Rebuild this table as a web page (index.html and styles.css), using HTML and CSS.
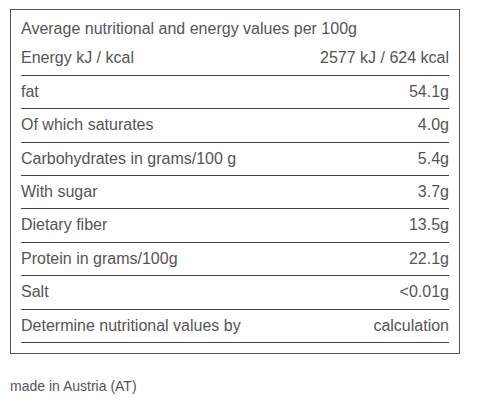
FILE: index.html
```html
<!DOCTYPE html>
<html>
    <head>
        <meta charset="utf-8">
        <title>Nutrition values</title>
        <link rel="stylesheet" href="styles.css">
    </head>
    <body>
        <div class="nutrition">
            <div class="caption">Average nutritional and energy values per 100g</div>
            <div class="row"><span>Energy kJ / kcal</span><span>2577 kJ / 624 kcal</span></div>
            <div class="row"><span>fat</span><span>54.1g</span></div>
            <div class="row"><span>Of which saturates</span><span>4.0g</span></div>
            <div class="row"><span>Carbohydrates in grams/100 g</span><span>5.4g</span></div>
            <div class="row"><span>With sugar</span><span>3.7g</span></div>
            <div class="row"><span>Dietary fiber</span><span>13.5g</span></div>
            <div class="row"><span>Protein in grams/100g</span><span>22.1g</span></div>
            <div class="row"><span>Salt</span><span>&lt;0.01g</span></div>
            <div class="row"><span>Determine nutritional values by</span><span>calculation</span></div>
        </div>
        <p class="origin">made in Austria (AT)</p>
    </body>
</html>
```

FILE: styles.css
```css
html,body{
    margin: 0px;
    background-color: #fff;
}

body{
    padding: 9px 0 0 10px;
    font-family: "Liberation Sans", Arial, sans-serif;
    color: #555;
}

.nutrition{
    width: 428px;
    border: 1px solid #555;
    padding: 10px;
    font-size: 16px;
}

.caption{
    line-height: 18.4px;
    padding-bottom: 4px;
}

.row{
    display: flex;
    justify-content: space-between;
    line-height: 18.4px;
    padding: 7px 0;
    border-bottom: 1px solid #444;
}

.origin{
    margin: 24px 0 0 0;
    font-size: 14px;
}
```
